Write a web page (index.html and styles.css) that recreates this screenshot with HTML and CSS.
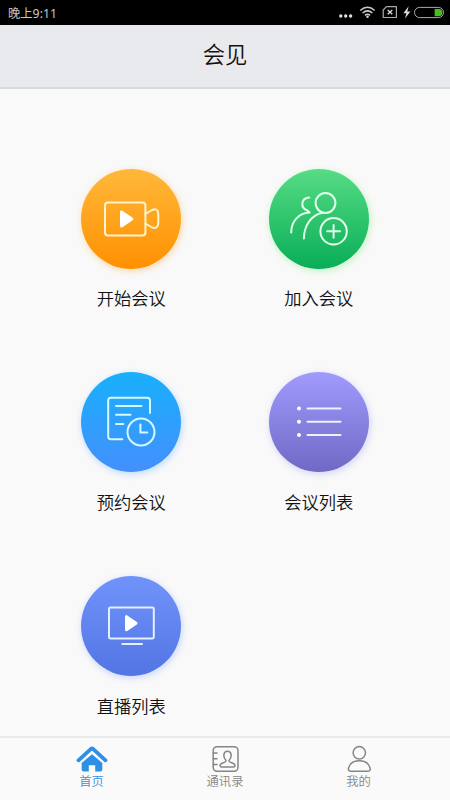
FILE: index.html
```html
<!DOCTYPE html>
<html lang="zh-CN">
<head>
<meta charset="utf-8">
<title>会见</title>
<link rel="stylesheet" href="styles.css">
</head>
<body>
<div class="status">
  <span class="time">晚上9:11</span>
  <svg class="indicators" viewBox="0 0 110 25" width="110" height="25" fill="none">
    <g fill="#ddd"><circle cx="0.8" cy="16" r="1.7"/><circle cx="5.7" cy="16" r="1.7"/><circle cx="10.6" cy="16" r="1.7"/></g>
    <g stroke="#ccc" stroke-width="1.5"><path d="M20.3 10.5Q27.5 4 34.7 10.5M22.6 13Q27.5 8.8 32.4 13M24.9 15.3Q27.5 13.3 30.1 15.3"/></g>
    <circle cx="27.5" cy="16.8" r="1.3" fill="#ccc"/>
    <path d="M46.5 6.7H56.4V17.5H43.2V10Z" stroke="#aaa" stroke-width="1.2" stroke-linejoin="round"/>
    <path d="M47.7 10L52.3 14.2M52.3 10L47.7 14.2" stroke="#ddd" stroke-width="1.3"/>
    <path d="M68.6 6.3L63.4 13.3H66.4L65 18.6L70.4 11.4H67.3Z" fill="#ddd"/>
    <rect x="74.5" y="7.4" width="29" height="10.2" rx="5.1" stroke="#aaa" stroke-width="1"/>
    <path d="M94.6 9H98.8A3.6 3.6 0 0 1 98.8 16.2H94.6Z" fill="#47c01b"/>
  </svg>
</div>
<header class="header"><h1>会见</h1></header>
<main class="grid">
  <a class="item">
    <span class="disc orange"><svg viewBox="0 0 100 100">
      <rect x="24" y="33.5" width="40.4" height="33" rx="3"/>
      <path d="M64.4 44.8L71 41Q77.3 38.5 77.3 45.5V53.5Q77.3 60.5 71 58.5L64.4 54.5"/>
      <path class="solid" d="M40.5 43V57L50.8 50Z"/>
    </svg></span>
    <span class="label">开始会议</span>
  </a>
  <a class="item">
    <span class="disc green"><svg viewBox="0 0 100 100">
      <circle cx="56.5" cy="34" r="9.9"/>
      <path d="M34.9 69.5C35 57 42 46 53.5 43.8"/>
      <path d="M40.3 28.4C32 29 31 38.5 38 41.3L40.6 43.6C30 44 22.3 52 22.2 63.5"/>
      <circle cx="64.6" cy="62.3" r="13.2"/>
      <path d="M58.2 62.3H71M64.6 55.9V68.7"/>
    </svg></span>
    <span class="label">加入会议</span>
  </a>
  <a class="item">
    <span class="disc blue"><svg viewBox="0 0 100 100">
      <path d="M69 41V28.6Q69 25.8 66.2 25.8H30Q27.2 25.8 27.2 28.6V64.5Q27.2 67.3 30 67.3H41.3M35 34.1H60.5M35 42.7H49.5M35 52H42.3"/>
      <circle cx="60" cy="60" r="13.5"/>
      <path d="M59.4 52.6V60.6H66.3"/>
    </svg></span>
    <span class="label">预约会议</span>
  </a>
  <a class="item">
    <span class="disc purple"><svg viewBox="0 0 100 100">
      <path d="M38.5 36.5H71.5M38.5 49.8H71.5M38.5 63.1H71.5"/>
      <g class="dots"><circle cx="30" cy="36.5" r="2"/><circle cx="30" cy="49.8" r="2"/><circle cx="30" cy="63.1" r="2"/></g>
    </svg></span>
    <span class="label">会议列表</span>
  </a>
  <a class="item">
    <span class="disc indigo"><svg viewBox="0 0 100 100">
      <rect x="28" y="31.6" width="44.8" height="30.8" rx="1.3"/>
      <path d="M41.3 68H61"/>
      <path class="solid" d="M45.5 40.7V53.7L55 47.2Z"/>
    </svg></span>
    <span class="label">直播列表</span>
  </a>
</main>
<nav class="tabs">
  <a class="tab active">
    <svg viewBox="0 0 32 28" width="32" height="28">
      <path d="M2.5 15.3L15 3.9Q16 3.2 17 3.9L29.5 15.3" fill="none" stroke="#2d8fe6" stroke-width="3.8" stroke-linecap="round" stroke-linejoin="round"/>
      <path d="M16 9.2L26.3 18V24.5Q26.3 26.5 24.3 26.5H19.2V20.3H12.8V26.5H7.7Q5.7 26.5 5.7 24.5V18Z" fill="#2d8fe6"/>
    </svg>
    <span>首页</span>
  </a>
  <a class="tab">
    <svg class="line" viewBox="0 0 32 28" width="32" height="28">
      <rect x="4.2" y="1.7" width="24.8" height="24.6" rx="4"/>
      <path d="M4.2 8H8M4.2 13.7H8M4.2 19.6H8"/>
      <path d="M17 15.5C13.5 11.5 14.5 6.3 18.5 6.3S23.5 11.5 20 15.5C19.7 18.3 26 17 26 20.5Q26 22 24.5 22H12.5Q11 22 11 20.5C11 17 17.3 18.3 17 15.5Z"/>
    </svg>
    <span>通讯录</span>
  </a>
  <a class="tab">
    <svg class="line" viewBox="0 0 32 28" width="32" height="28">
      <circle cx="16.3" cy="7.8" r="6.2"/>
      <path d="M8.3 26.2Q4.8 26.2 5.5 23C6.8 18.5 10.3 15.8 16.3 15.8S25.8 18.5 27.1 23Q27.8 26.2 24.3 26.2Z"/>
    </svg>
    <span>我的</span>
  </a>
</nav>
</body>
</html>
```

FILE: styles.css
```css
* { box-sizing: border-box; }
body {
  margin: 0;
  width: 450px;
  height: 800px;
  display: flex;
  flex-direction: column;
  overflow: hidden;
  background: #f9f9f9;
  color: #111;
  font-family: "Noto Sans CJK SC", sans-serif;
  font-weight: 350;
}
.status {
  height: 25px;
  flex: none;
  display: flex;
  justify-content: space-between;
  align-items: center;
  padding: 0 0 0 8px;
  background: #000;
  color: #c8c8c8;
}
.time {
  padding-top: 3px;
  font: 12.3px/22px "Noto Sans", "Noto Sans CJK SC", sans-serif;
}
.indicators { overflow: visible; }
.header {
  height: 64px;
  flex: none;
  background: #e9eaee;
  border-bottom: 2px solid #d9dade;
}
.header h1 {
  margin: 0;
  font-size: 22.3px;
  font-weight: 350;
  line-height: 56px;
  text-align: center;
}
.grid {
  flex: 1;
  min-height: 0;
  display: grid;
  grid-template-columns: 187.5px 187.5px;
  grid-auto-rows: 203.7px;
  justify-content: center;
  padding-top: 79.8px;
}
.item {
  display: flex;
  flex-direction: column;
  align-items: center;
}
.disc {
  width: 100px;
  height: 100px;
  border-radius: 50%;
}
.disc svg {
  display: block;
  fill: none;
  stroke: #fff;
  stroke-opacity: 0.88;
  stroke-width: 2;
  stroke-linecap: round;
  stroke-linejoin: round;
}
.disc .solid { fill: #fff; stroke: #fff; stroke-width: 3; stroke-opacity: 1; }
.disc .dots { fill: #fff; stroke: none; }
.orange { background: linear-gradient(#ffb83a, #ff9000); box-shadow: 1px 2px 7px #ff990055; }
.orange svg { stroke: #fff4cf; stroke-opacity: 1; }
.green { background: linear-gradient(#56dc84, #09ad58); box-shadow: 1px 2px 7px #50e65055; }
.green svg { stroke: #e2ffe9; stroke-opacity: 1; }
.blue { background: linear-gradient(#18b0fc, #448ffc); box-shadow: 1px 2px 7px #409cff55; }
.blue svg { stroke: #d5faff; stroke-opacity: 1; }
.purple { background: linear-gradient(#a09bfd, #7069c5); box-shadow: 1px 2px 7px #847dff50; }
.indigo { background: linear-gradient(#7093fb, #5375e4); box-shadow: 1px 2px 7px #5d85ff50; }
.indigo svg { stroke: #e4efff; stroke-opacity: 1; }
.label {
  margin-top: 16.4px;
  font-size: 17.3px;
  line-height: 26px;
}
.tabs {
  height: 64px;
  flex: none;
  display: grid;
  grid-template-columns: repeat(3, 133.5px);
  justify-content: center;
  border-top: 2px solid #e9e9e9;
  background: #fafafa;
}
.tab {
  display: flex;
  flex-direction: column;
  align-items: center;
  padding-top: 7px;
  color: #858585;
  font-size: 12.3px;
  line-height: 16px;
}
.tab svg { flex: none; }
.tab.active { color: #3b91dc; }
.line { fill: none; stroke: #858585; stroke-width: 1.5; stroke-linecap: round; }
```
